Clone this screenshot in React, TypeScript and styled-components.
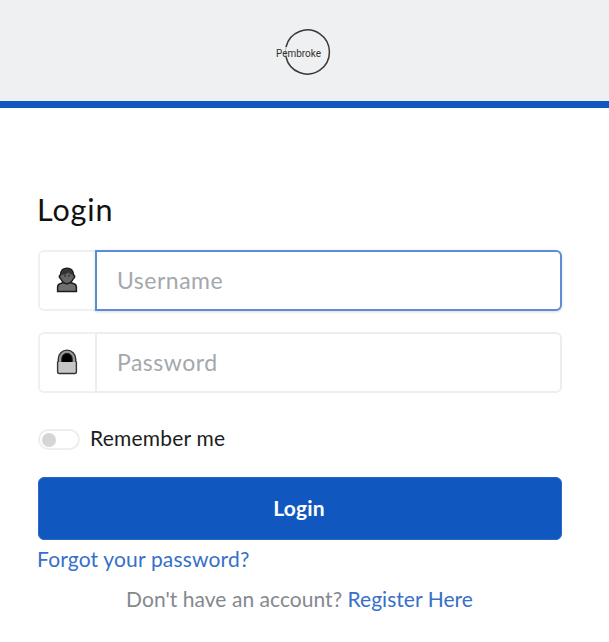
import React from 'react';
import styled, { createGlobalStyle } from 'styled-components';

const GlobalStyle = createGlobalStyle`
  *, *::before, *::after { box-sizing: border-box; }
  body {
    margin: 0;
    background: #fff;
    font-family: Lato, "Open Sans", sans-serif;
    color: #1c1d20;
  }
`;

const Header = styled.header`
  display: flex;
  justify-content: center;
  height: 108px;
  padding: 26px 2px 0 0;
  background: #eff0f2;
  border-bottom: 7px solid #1157c0;
`;

const Form = styled.form`
  display: flex;
  flex-direction: column;
  padding: 83px 47px 0 38px;
`;

const Title = styled.h1`
  margin: 0 0 23px -1px;
  font-size: 30.5px;
  font-weight: 400;
  line-height: 36px;
  letter-spacing: 0.9px;
  color: #111;
`;

const Field = styled.label`
  display: flex;
  height: 61px;
  margin-bottom: 21px;
`;

const IconCell = styled.span`
  display: flex;
  align-items: center;
  justify-content: center;
  width: 57px;
  padding: 0 1px 2px 0;
  border: 2px solid #f0f0f1;
  border-right: 0;
  border-radius: 6px 0 0 6px;
`;

const Input = styled.input<{ $active?: boolean }>`
  flex: 1;
  min-width: 0;
  padding: 0 20px 2px;
  border: ${(p) => (p.$active ? '2px solid #5c8cd4' : '2px solid #ededee')};
  border-radius: 0 6px 6px 0;
  box-shadow: ${(p) => (p.$active ? '0 1px 3px rgba(0, 0, 0, 0.14)' : 'none')};
  outline: none;
  background: #fff;
  font: 400 23px Lato, "Open Sans", sans-serif;
  letter-spacing: 0.5px;
  &::placeholder { color: #a3a8ae; opacity: 1; }
`;

const Remember = styled.label`
  display: flex;
  align-items: center;
  gap: 10px;
  height: 28px;
  margin: 9px 0 26px;
  font-size: 21px;
  letter-spacing: 0.22px;
`;

const Toggle = styled.span`
  display: flex;
  align-items: center;
  width: 42px;
  height: 21px;
  margin-top: 5px;
  padding-left: 2px;
  border: 2px solid #eeeeef;
  border-radius: 11px;
`;

const Knob = styled.span`
  width: 14px;
  height: 14px;
  border-radius: 50%;
  background: #d5d5d5;
`;

const Submit = styled.button`
  height: 63px;
  padding: 0 2px 2px 0;
  border: 1px solid #2a68c6;
  border-radius: 6px;
  background: #1157c0;
  color: #fff;
  font: 700 21px Lato, "Open Sans", sans-serif;
  letter-spacing: 0.15px;
`;

const Link = styled.a`
  color: #3670c8;
  text-decoration: none;
`;

const Forgot = styled.div`
  margin: 5px 0 0 -1px;
  font-size: 21px;
  line-height: 28px;
  letter-spacing: 0.17px;
`;

const Register = styled.div`
  margin-top: 12px;
  padding-right: 1px;
  font-size: 21px;
  line-height: 28px;
  letter-spacing: 0.04px;
  text-align: center;
  white-space: nowrap;
  color: #84898e;
`;

const Logo = () => (
  <svg width="60" height="54" viewBox="0 0 60 54" role="img" aria-label="Pembroke">
    <path d="M12 21A22 22 0 1 1 12 31" fill="none" stroke="#383838" strokeWidth="1.5" />
    <path d="M12 31A22 22 0 0 1 12 21" fill="none" stroke="#aaa" strokeWidth="0.8" />
    <text x="2" y="30.5" fontFamily="Roboto, sans-serif" fontSize="11" fill="#303030" textLength="45" lengthAdjust="spacingAndGlyphs">Pembroke</text>
  </svg>
);

const PersonIcon = () => (
  <svg width="22" height="26" viewBox="0 0 22 26">
    <path d="M1.600 24.500v-4.200q0-3 3-3.800l3.700-1.200h5.400l3.700 1.200q3 .8 3 3.800v4.200z" fill="#707070" stroke="#1c1c1c" strokeWidth="1.500" />
    <path d="M4.500 8Q5 1.200 11 1.200T17.500 8Q20 9.500 17.300 11.800 15 16.700 11 16.700T4.700 11.800Q2 9.500 4.500 8Z" fill="#666" stroke="#1c1c1c" strokeWidth="1.500" />
    <path d="M5 8Q5.500 2 11 2T17 8Q14 7 12.500 5.500 10 7.500 5 8Z" fill="#333" />
    <path d="M9 7.500v2.500M13 7.500v2.500" stroke="#222" strokeWidth="1" />
  </svg>
);

const LockIcon = () => (
  <svg width="22" height="26" viewBox="0 0 22 26">
    <path d="M2.300 14V9.800a8.700 8.700 0 0 1 17.400 0V14z" fill="#999" stroke="#333" strokeWidth="1.400" />
    <path d="M5.800 13.500V9.500a5.200 5.200 0 0 1 10.400 0v4z" fill="#000" stroke="#222" />
    <path d="M1.600 13h18.800v10q0 1.500-1.500 1.500H3.100q-1.500 0-1.500-1.500z" fill="#c6c6c6" />
    <path d="M1.600 12.500V23q0 1.500 1.500 1.500h15.800q1.500 0 1.500-1.500V12.500" fill="none" stroke="#333" strokeWidth="1.400" />
  </svg>
);

export default function App() {
  return (
    <>
      <GlobalStyle />
      <Header><Logo /></Header>
      <Form onSubmit={(e) => e.preventDefault()}>
        <Title>Login</Title>
        <Field>
          <IconCell><PersonIcon /></IconCell>
          <Input $active placeholder="Username" />
        </Field>
        <Field>
          <IconCell><LockIcon /></IconCell>
          <Input type="password" placeholder="Password" />
        </Field>
        <Remember>
          <Toggle><Knob /></Toggle>
          Remember me
        </Remember>
        <Submit>Login</Submit>
        <Forgot><Link href="#">Forgot your password?</Link></Forgot>
        <Register>Don't have an account? <Link href="#">Register Here</Link></Register>
      </Form>
    </>
  );
}
